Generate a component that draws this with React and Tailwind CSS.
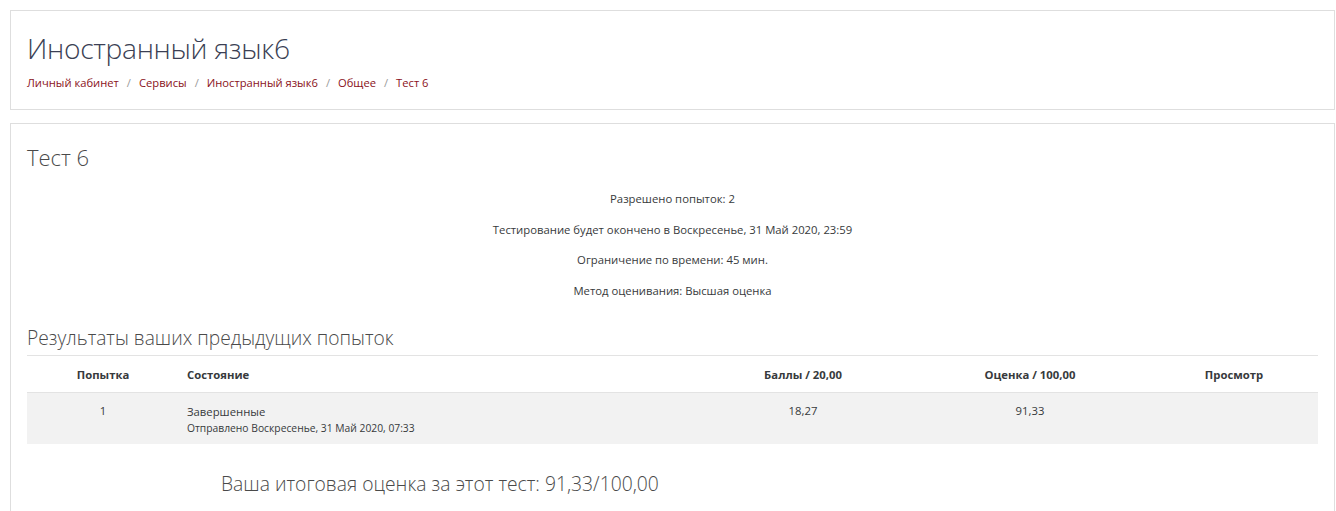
import React from 'react';

const crumbs = ['Личный кабинет', 'Сервисы', 'Иностранный язык6', 'Общее', 'Тест 6'];

const info = [
  'Разрешено попыток: 2',
  'Тестирование будет окончено в Воскресенье, 31 Май 2020, 23:59',
  'Ограничение по времени: 45 мин.',
  'Метод оценивания: Высшая оценка',
];

const App = () => {
  return (
    <div
      className="min-h-screen bg-white text-[#373a3c] pl-[10px] pr-[1px] pt-[10px]"
      style={{ fontFamily: '"Open Sans", "Noto Sans", sans-serif' }}
    >
      <header className="border border-[#dedede] px-4 pt-[19px] pb-[17px]">
        <h1 className="text-[28.2px] font-light leading-[36px] text-[#3b3f54] tracking-[-0.3px]">
          Иностранный язык6
        </h1>
        <nav className="mt-[8px] flex items-center text-[11.2px] leading-[18px]">
          {crumbs.map((c, i) => (
            <span key={c} className="flex items-center">
              <a className="text-[#8a1221]">{c}</a>
              {i < crumbs.length - 1 && <span className="px-[8px] text-[#9a9a9a]">/</span>}
            </span>
          ))}
        </nav>
      </header>

      <main className="mt-[13px] border border-[#dedede] px-4 pt-[18px] pb-8">
        <h2 className="text-[22px] font-light leading-[30px] text-[#4a4a4a]">Тест 6</h2>
        <div className="mt-[18px] flex flex-col items-center gap-[12px] text-[11.3px] leading-[18.5px]">
          {info.map(t => (
            <p key={t}>{t}</p>
          ))}
        </div>

        <h3 className="mt-[24px] text-[19.2px] font-light leading-[28px] text-[#4a4a4a] border-b border-[#e3e3e3] pb-[3px]">
          Результаты ваших предыдущих попыток
        </h3>
        <table className="w-full text-[11.3px] border-collapse">
          <thead>
            <tr className="border-b border-[#e3e3e3]">
              <th className="w-[152px] h-[36px] pt-[3px] font-bold text-center">Попытка</th>
              <th className="w-[517px] pt-[3px] font-bold text-left pl-[8px]">Состояние</th>
              <th className="w-[214px] pt-[3px] font-bold text-center">Баллы / 20,00</th>
              <th className="w-[240px] pt-[3px] font-bold text-center">Оценка / 100,00</th>
              <th className="pt-[3px] font-bold text-center">Просмотр</th>
            </tr>
          </thead>
          <tbody>
            <tr className="bg-[#f2f2f2] align-top">
              <td className="text-center pt-[10px] h-[52px]">1</td>
              <td className="pl-[8px] pt-[10px] leading-[17px]">
                <div>Завершенные</div>
                <div className="text-[10.3px]">Отправлено Воскресенье, 31 Май 2020, 07:33</div>
              </td>
              <td className="text-center pt-[10px]">18,27</td>
              <td className="text-center pt-[10px]">91,33</td>
              <td></td>
            </tr>
          </tbody>
        </table>

        <p className="mt-[26px] pl-[194px] text-[19.3px] font-light leading-[28px] text-[#4a4a4a]">
          Ваша итоговая оценка за этот тест: 91,33/100,00
        </p>
      </main>
    </div>
  );
};

export default App;
